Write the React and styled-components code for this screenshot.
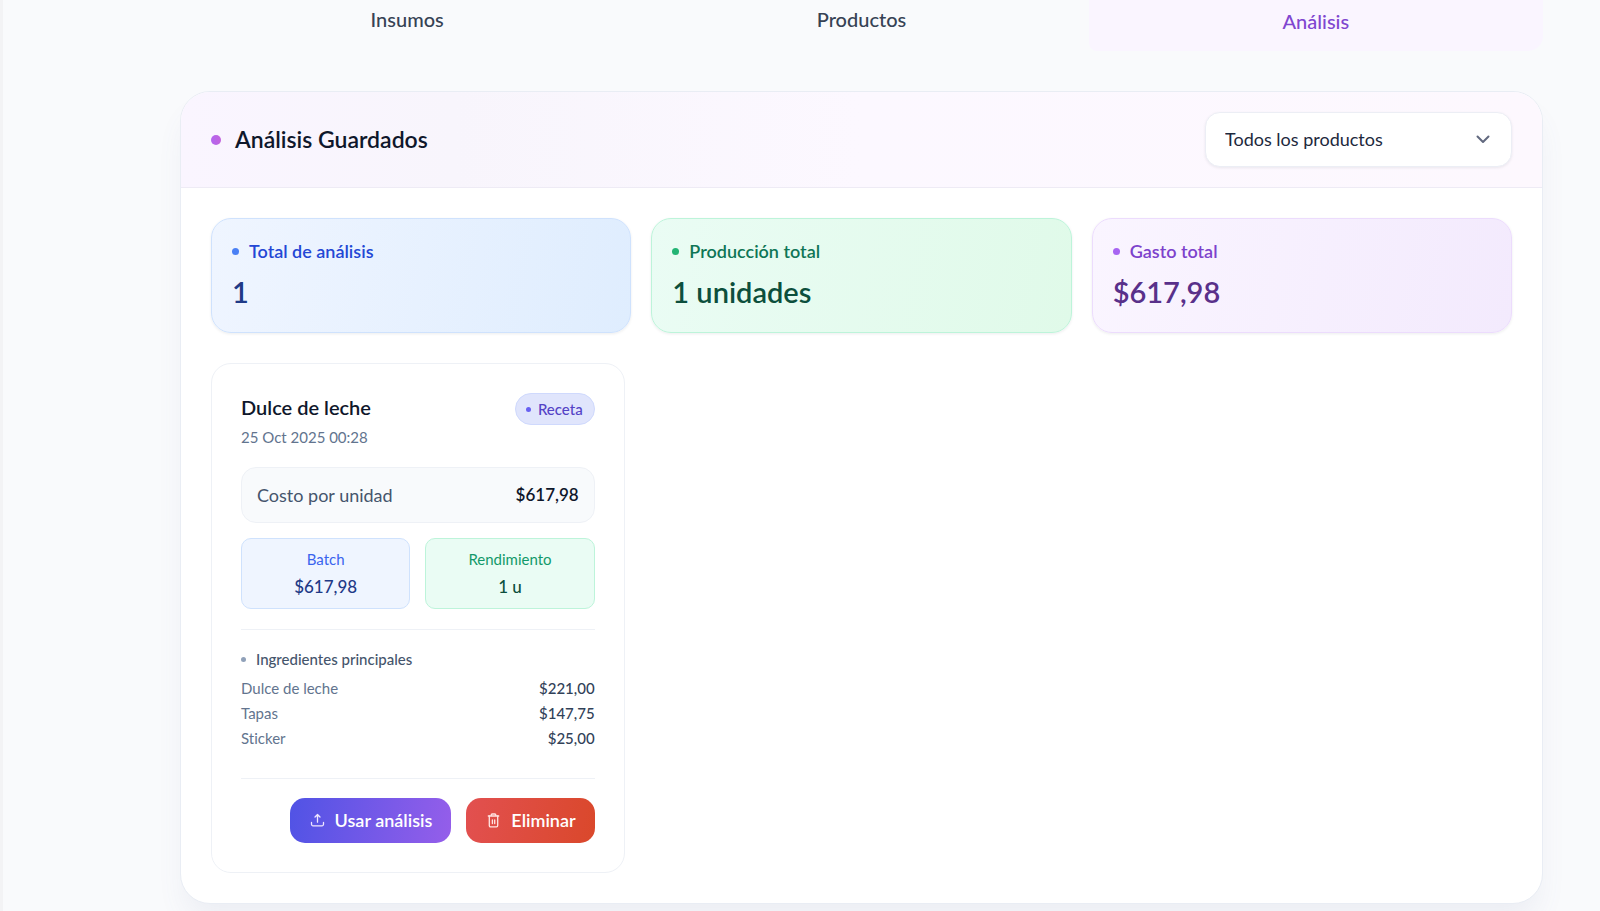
import React, { useState } from 'react'
import styled, { createGlobalStyle, ThemeProvider } from 'styled-components'

const theme = {
  fonts: {
    family: '"Lato", "Open Sans", sans-serif',
    small: '15px',
    amount: '17px',
    base: '18px',
    tab: '20px',
    title: '23px',
    value: '29px'
  },
  colors: {
    page: '#f9fafc',
    text: '#0f172b',
    textSecondary: '#45556c',
    textMuted: '#62748e',
    border: '#eef1f6'
  }
}

const tones = {
  blue: {
    background: '#eff5ff',
    backgroundEnd: '#dfedfe',
    border: '#cfe2fd',
    dot: '#4a80f5',
    label: '#2347d5',
    caption: '#3a64ee',
    value: '#1f3a87'
  },
  green: {
    background: '#eafcf4',
    backgroundEnd: '#e0fae9',
    border: '#bdf4da',
    dot: '#23b474',
    label: '#0f7656',
    caption: '#12996a',
    value: '#0c4f3c'
  },
  purple: {
    background: '#faf5ff',
    backgroundEnd: '#f3eafd',
    border: '#ecdcfd',
    dot: '#a764f2',
    label: '#7d42cc',
    caption: '#7d42cc',
    value: '#59308a'
  }
}

const GlobalStyle = createGlobalStyle`
  * {
    box-sizing: border-box;
  }

  body {
    margin: 0;
    background: #f9fafc;
  }

  h1, h2, h3, p, ul, dl, dd {
    margin: 0;
    padding: 0;
  }

  button, select {
    font: inherit;
  }
`

const Page = styled.div`
  min-height: 100vh;
  padding: 0 57px 7px 177px;
  overflow: hidden;
  border-left: 3px solid #f3f3f5;
  background: ${props => props.theme.colors.page};
  color: ${props => props.theme.colors.text};
  font-family: ${props => props.theme.fonts.family};
  font-size: ${props => props.theme.fonts.base};
  font-variant-ligatures: none;
  line-height: 25px;
`

const Tabs = styled.nav`
  display: grid;
  grid-template-columns: repeat(3, 1fr);
  margin-bottom: 40px;
`

const Tab = styled.button`
  height: 51px;
  padding: ${props => props.$active ? '0 0 8px' : '0 0 12px'};
  border: 0;
  border-radius: 0 0 15px 8px;
  background: ${props => props.$active ? '#faf5ff' : 'transparent'};
  color: ${props => props.$active ? '#8046d0' : '#364254'};
  font-size: ${props => props.theme.fonts.tab};
  font-weight: 500;
`

const Panel = styled.main`
  overflow: hidden;
  border: 1px solid #e9edf4;
  border-radius: 30px;
  background: #fff;
  box-shadow: 0 20px 30px -6px rgba(100, 116, 160, 0.09);
`

const PanelHeader = styled.header`
  display: flex;
  align-items: center;
  justify-content: space-between;
  padding: 20px 30px;
  border-bottom: 1px solid #eeebf5;
  background: linear-gradient(90deg, #faf5ff, #f8f5fc 20%, #fcf8ff 50%, #fdf8fe);
`

const PanelTitle = styled.h1`
  display: flex;
  align-items: center;
  gap: 14px;
  font-size: ${props => props.theme.fonts.title};
  font-weight: 600;
`

const Dot = styled.span`
  flex: none;
  width: ${props => props.$size}px;
  height: ${props => props.$size}px;
  border-radius: 50%;
  background: ${props => props.$color};
`

const SelectBox = styled.div`
  position: relative;
  width: 307px;
`

const Select = styled.select`
  width: 100%;
  height: 55px;
  padding: 0 48px 0 19px;
  appearance: none;
  border: 1px solid #eceef5;
  border-radius: 15px;
  background: #fff;
  color: #1d293d;
  box-shadow: 0 1px 3px rgba(15, 23, 43, 0.08);
`

const Chevron = styled.svg`
  position: absolute;
  top: 18px;
  right: 20px;
  pointer-events: none;
`

const PanelBody = styled.div`
  padding: 30px;
`

const Summary = styled.section`
  display: grid;
  grid-template-columns: repeat(3, 1fr);
  gap: 20px;
  margin-bottom: 30px;
`

const SummaryCard = styled.div`
  display: flex;
  flex-direction: column;
  gap: 8px;
  padding: 20px;
  border: 1px solid ${props => tones[props.$tone].border};
  border-radius: 20px;
  background: linear-gradient(100deg, ${props => tones[props.$tone].background}, ${props => tones[props.$tone].backgroundEnd});
  box-shadow: 0 1px 3px rgba(15, 23, 43, 0.08);
`

const SummaryLabel = styled.h2`
  display: flex;
  align-items: center;
  gap: 10px;
  color: ${props => tones[props.$tone].label};
  font-size: ${props => props.theme.fonts.base};
  font-weight: 600;
`

const SummaryValue = styled.p`
  color: ${props => tones[props.$tone].value};
  font-size: ${props => props.theme.fonts.value};
  font-weight: 600;
  line-height: 40px;
`

const Analyses = styled.section`
  display: grid;
  grid-template-columns: repeat(3, 1fr);
  gap: 30px;
`

const Card = styled.article`
  padding: 29px;
  border: 1px solid ${props => props.theme.colors.border};
  border-radius: 20px;
`

const CardHeader = styled.div`
  display: flex;
  align-items: flex-start;
  justify-content: space-between;
  margin-bottom: 17px;
`

const CardTitle = styled.h3`
  margin-bottom: 3px;
  font-size: ${props => props.theme.fonts.tab};
  font-weight: 600;
  line-height: 29px;
`

const CardDate = styled.p`
  color: ${props => props.theme.colors.textMuted};
  font-size: ${props => props.theme.fonts.small};
`

const Badge = styled.span`
  display: flex;
  align-items: center;
  gap: 7px;
  height: 32px;
  padding: 0 11px 0 10px;
  border: 1px solid #cfd9fd;
  border-radius: 16px;
  background: #e0e5fc;
  color: #5443c6;
  font-size: ${props => props.theme.fonts.small};
  font-weight: 500;
`

const UnitCost = styled.div`
  display: flex;
  justify-content: space-between;
  margin-bottom: 15px;
  padding: 14px 15px;
  border: 1px solid ${props => props.theme.colors.border};
  border-radius: 15px;
  background: #f8fafc;
  color: ${props => props.theme.colors.textSecondary};
  line-height: 26px;

  strong {
    color: ${props => props.theme.colors.text};
    font-size: ${props => props.theme.fonts.amount};
    font-weight: 600;
  }
`

const Metrics = styled.div`
  display: grid;
  grid-template-columns: 1fr 1fr;
  gap: 15px;
  margin-bottom: 20px;
`

const Metric = styled.dl`
  padding: 8px 9px 9px;
  border: 1px solid ${props => tones[props.$tone].border};
  border-radius: 10px;
  background: ${props => tones[props.$tone].background};
  text-align: center;

  dt {
    color: ${props => tones[props.$tone].caption};
    font-size: ${props => props.theme.fonts.small};
  }

  dd {
    padding-top: 2px;
    color: ${props => tones[props.$tone].value};
    font-size: ${props => props.theme.fonts.amount};
    font-weight: 500;
  }
`

const Ingredients = styled.div`
  padding: 17px 0 27px;
  border-top: 1px solid ${props => props.theme.colors.border};
  border-bottom: 1px solid ${props => props.theme.colors.border};
  font-size: ${props => props.theme.fonts.small};
`

const IngredientsTitle = styled.h3`
  display: flex;
  align-items: center;
  gap: 10px;
  margin-bottom: 4px;
  color: ${props => props.theme.colors.textSecondary};
  font-size: ${props => props.theme.fonts.small};
  font-weight: 500;
`

const IngredientList = styled.ul`
  list-style: none;
`

const Ingredient = styled.li`
  display: flex;
  justify-content: space-between;
  color: ${props => props.theme.colors.textMuted};

  span:last-child {
    color: #314158;
    font-weight: 500;
  }
`

const Actions = styled.div`
  display: flex;
  justify-content: flex-end;
  gap: 15px;
  padding-top: 19px;
`

const ActionButton = styled.button`
  display: flex;
  align-items: center;
  gap: 9px;
  height: 45px;
  padding: 0 19px;
  border: 0;
  border-radius: 15px;
  background: ${props => props.$danger
    ? 'linear-gradient(100deg, #e25050, #da482b)'
    : 'linear-gradient(100deg, #5053e5, #955eea)'};
  color: #fff;
  font-weight: 600;
`

const UploadIcon = () => (
  <svg width='17' height='17' viewBox='0 0 17 17' fill='none' stroke='#efe6ff' strokeWidth='1.3' strokeLinecap='round' strokeLinejoin='round'>
    <path d='M2.5 10.5v1.8a1.5 1.5 0 0 0 1.5 1.5h9a1.5 1.5 0 0 0 1.5-1.5v-1.8' />
    <path d='M6 5l2.5-2.5L11 5M8.5 2.5v7.7' />
  </svg>
)

const TrashIcon = () => (
  <svg width='17' height='17' viewBox='0 0 17 17' fill='none' stroke='#ffe4e2' strokeWidth='1.3' strokeLinecap='round' strokeLinejoin='round'>
    <path d='M3.3 4h10.4M6.2 4V3a1 1 0 0 1 1-1h2.6a1 1 0 0 1 1 1v1' />
    <path d='M4.3 4v9.6a1.2 1.2 0 0 0 1.2 1.2h6a1.2 1.2 0 0 0 1.2-1.2V4M7.4 8v3.6M9.7 8v3.6' />
  </svg>
)

const tabs = ['Insumos', 'Productos', 'Análisis']

const summary = [
  { tone: 'blue', label: 'Total de análisis', value: '1' },
  { tone: 'green', label: 'Producción total', value: '1 unidades' },
  { tone: 'purple', label: 'Gasto total', value: '$617,98' }
]

const analyses = [
  {
    name: 'Dulce de leche',
    date: '25 Oct 2025 00:28',
    type: 'Receta',
    unitCost: '$617,98',
    batch: '$617,98',
    output: '1 u',
    ingredients: [
      { name: 'Dulce de leche', cost: '$221,00' },
      { name: 'Tapas', cost: '$147,75' },
      { name: 'Sticker', cost: '$25,00' }
    ]
  }
]

const AnalysisCard = ({ analysis }) => (
  <Card>
    <CardHeader>
      <div>
        <CardTitle>{analysis.name}</CardTitle>
        <CardDate>{analysis.date}</CardDate>
      </div>
      <Badge><Dot $size={5} $color='#6760f2' />{analysis.type}</Badge>
    </CardHeader>
    <UnitCost>
      <span>Costo por unidad</span>
      <strong>{analysis.unitCost}</strong>
    </UnitCost>
    <Metrics>
      <Metric $tone='blue'>
        <dt>Batch</dt>
        <dd>{analysis.batch}</dd>
      </Metric>
      <Metric $tone='green'>
        <dt>Rendimiento</dt>
        <dd>{analysis.output}</dd>
      </Metric>
    </Metrics>
    <Ingredients>
      <IngredientsTitle><Dot $size={5} $color='#90a1b9' />Ingredientes principales</IngredientsTitle>
      <IngredientList>
        {analysis.ingredients.map(({ name, cost }) => (
          <Ingredient key={name}><span>{name}</span><span>{cost}</span></Ingredient>
        ))}
      </IngredientList>
    </Ingredients>
    <Actions>
      <ActionButton type='button'><UploadIcon />Usar análisis</ActionButton>
      <ActionButton type='button' $danger><TrashIcon />Eliminar</ActionButton>
    </Actions>
  </Card>
)

const App = () => {
  const [activeTab, setActiveTab] = useState('Análisis')
  const [product, setProduct] = useState('all')

  return (
    <ThemeProvider theme={theme}>
      <GlobalStyle />
      <Page>
        <Tabs>
          {tabs.map(tab => (
            <Tab key={tab} type='button' $active={tab === activeTab} onClick={() => setActiveTab(tab)}>{tab}</Tab>
          ))}
        </Tabs>
        <Panel>
          <PanelHeader>
            <PanelTitle>
              <Dot $size={10} $color='linear-gradient(90deg, #b266f0, #c363dc)' />
              Análisis Guardados
            </PanelTitle>
            <SelectBox>
              <Select aria-label='Producto' value={product} onChange={event => setProduct(event.target.value)}>
                <option value='all'>Todos los productos</option>
              </Select>
              <Chevron width='18' height='18' viewBox='0 0 18 18' fill='none' stroke='#62697f' strokeWidth='2' strokeLinecap='round' strokeLinejoin='round'>
                <path d='M3.5 6.5 9 12 14.5 6.5' />
              </Chevron>
            </SelectBox>
          </PanelHeader>
          <PanelBody>
            <Summary>
              {summary.map(({ tone, label, value }) => (
                <SummaryCard key={label} $tone={tone}>
                  <SummaryLabel $tone={tone}><Dot $size={7} $color={tones[tone].dot} />{label}</SummaryLabel>
                  <SummaryValue $tone={tone}>{value}</SummaryValue>
                </SummaryCard>
              ))}
            </Summary>
            <Analyses>
              {analyses.map(analysis => <AnalysisCard key={analysis.name} analysis={analysis} />)}
            </Analyses>
          </PanelBody>
        </Panel>
      </Page>
    </ThemeProvider>
  )
}

export default App
